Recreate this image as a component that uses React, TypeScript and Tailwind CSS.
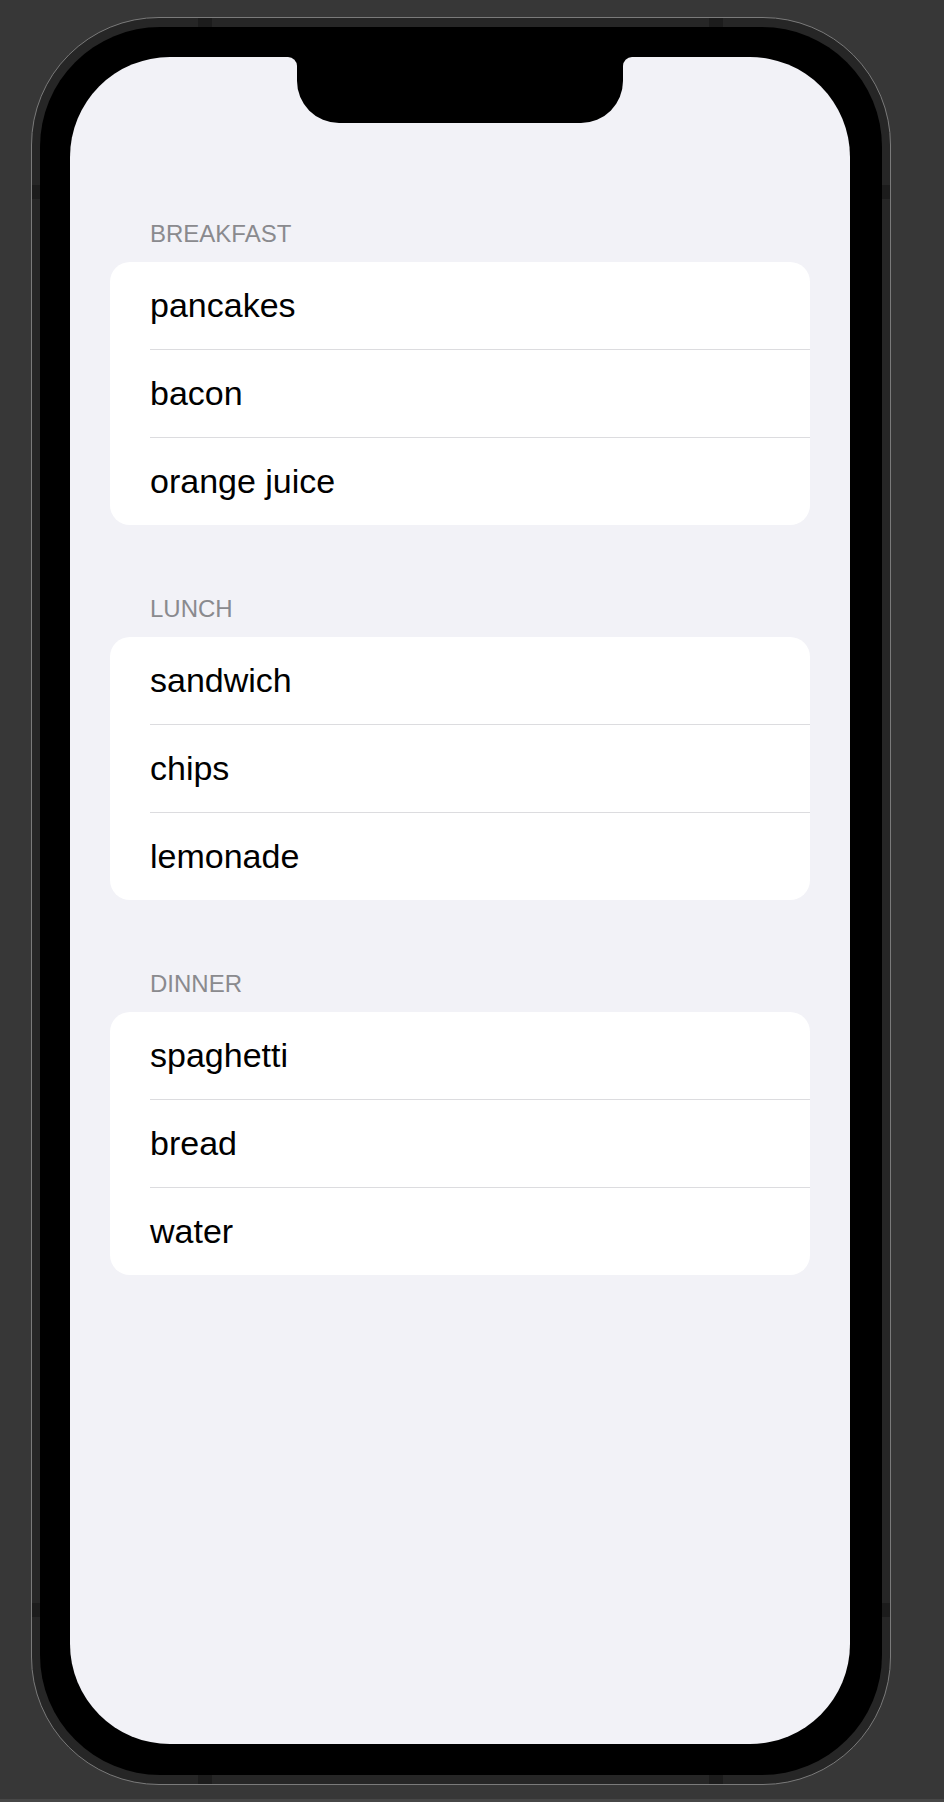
const sections = [
  { title: "BREAKFAST", items: ["pancakes", "bacon", "orange juice"] },
  { title: "LUNCH", items: ["sandwich", "chips", "lemonade"] },
  { title: "DINNER", items: ["spaghetti", "bread", "water"] },
];

const Section = ({ title, items }: { title: string; items: string[] }) => {
  return (
    <div className="flex flex-col">
      <div className="pl-[40px] mb-[14px] text-[24px] leading-[28px] text-[#8a8a8e]">{title}</div>
      <div className="bg-white rounded-[20px] overflow-hidden">
        {items.map((item, i) => (
          <div key={item} className="pl-[40px]">
            <div
              className={
                i === 0
                  ? "h-[87px] leading-[87px] text-[34px] text-black"
                  : "h-[88px] leading-[87px] text-[34px] text-black border-t border-[#dcdcdf]"
              }
            >
              {item}
            </div>
          </div>
        ))}
      </div>
    </div>
  );
};

export default function App() {
  return (
    <div
      className="w-[944px] h-[1802px] bg-[#373737] flex flex-col"
      style={{ fontFamily: '"Liberation Sans", Arial, sans-serif' }}
    >
      <div className="flex-1 pt-[17px] pl-[31px]">
        <div className="relative w-[860px] h-[1768px] rounded-[128px] border border-[#7a7a7a] bg-[#262626] px-[8px] py-[9px] flex">
          {/* antenna marks on the frame */}
          <div className="absolute top-0 left-[166px] w-[14px] h-[9px] bg-[#1c1c1c]" />
          <div className="absolute top-0 left-[677px] w-[14px] h-[9px] bg-[#1c1c1c]" />
          <div className="absolute bottom-0 left-[166px] w-[14px] h-[9px] bg-[#1c1c1c]" />
          <div className="absolute bottom-0 left-[677px] w-[14px] h-[9px] bg-[#1c1c1c]" />
          <div className="absolute left-0 top-[167px] w-[8px] h-[14px] bg-[#1c1c1c]" />
          <div className="absolute right-0 top-[167px] w-[8px] h-[14px] bg-[#1c1c1c]" />
          <div className="absolute left-0 top-[1585px] w-[8px] h-[14px] bg-[#1c1c1c]" />
          <div className="absolute right-0 top-[1585px] w-[8px] h-[14px] bg-[#1c1c1c]" />

          <div className="flex-1 flex rounded-[120px] bg-black pl-[30px] pr-[32px] pt-[30px] pb-[31px]">
            <div className="relative flex-1 rounded-[100px] bg-[#f2f2f7] overflow-hidden">
              {/* notch */}
              <div className="absolute top-0 left-[218px] w-[9px] h-[9px] bg-black">
                <div className="w-full h-full bg-[#f2f2f7] rounded-tr-[9px]" />
              </div>
              <div className="absolute top-0 left-[227px] w-[326px] h-[66px] bg-black rounded-b-[42px]" />
              <div className="absolute top-0 left-[553px] w-[9px] h-[9px] bg-black">
                <div className="w-full h-full bg-[#f2f2f7] rounded-tl-[9px]" />
              </div>

              <div className="pt-[163px] px-[40px] flex flex-col gap-[70px]">
                {sections.map((s) => (
                  <Section key={s.title} title={s.title} items={s.items} />
                ))}
              </div>
            </div>
          </div>
        </div>
      </div>
      <div className="h-[3px] bg-[#474747]" />
    </div>
  );
}
